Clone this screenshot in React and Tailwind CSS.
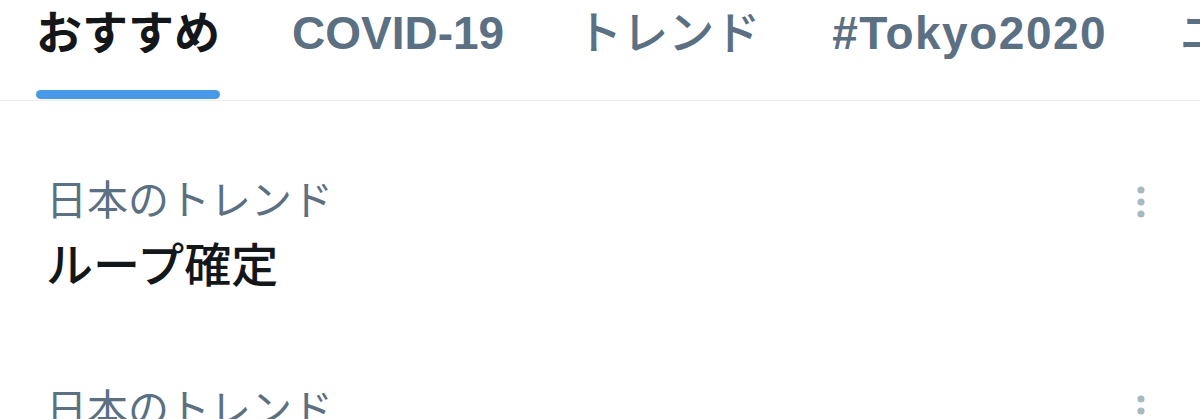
import React from 'react'

const tabs = [
  { text: 'おすすめ', cls: 'font-bold' },
  { text: 'COVID-19', cls: 'font-bold' },
  { text: 'トレンド', cls: 'font-medium' },
  { text: '#Tokyo2020', cls: 'font-bold tracking-[1.5px]' },
  { text: 'ニュース', cls: 'font-medium' },
]

const trends = [
  { label: '日本のトレンド', title: 'ループ確定' },
  { label: '日本のトレンド', title: 'ワクチン接種' },
]

const MoreIcon = () => (
  <svg viewBox="0 0 30 36" className="w-[30px] h-[36px] mt-[8px] shrink-0" fill="#aab8c2">
    <circle cx="15" cy="6" r="3.6" />
    <circle cx="15" cy="18" r="3.6" />
    <circle cx="15" cy="30" r="3.6" />
  </svg>
)

const App = () => {
  return (
    <div
      className="w-[1200px] h-[419px] overflow-hidden bg-white"
      style={{ fontFamily: '"Liberation Sans", "Noto Sans CJK JP", sans-serif' }}
    >
      {/* Tabs */}
      <nav className="flex h-[101px] border-b border-[#e6ecf0] whitespace-nowrap">
        {tabs.map((tab, i) => (
          <div key={tab.text} className="px-[36px] shrink-0">
            <div className="flex flex-col h-full">
              <span
                className={
                  'pt-[3px] text-[46px] leading-[60px] ' +
                  tab.cls +
                  (i === 0 ? ' text-[#14171a]' : ' text-[#5b7083]')
                }
              >
                {tab.text}
              </span>
              {i === 0 && <div className="mt-auto mb-[1px] h-[9px] rounded-full bg-[#4a99e9]" />}
            </div>
          </div>
        ))}
      </nav>

      {/* Trends */}
      <section className="pt-[39px]">
        {trends.map((t, i) => (
          <div key={i} className="h-[209px] pt-[36px] pl-[46px] pr-[44px] flex justify-between items-start">
            <div className="flex flex-col">
              <span className="text-[41px] leading-[50px] text-[#5b7083]">{t.label}</span>
              <span className="mt-[12px] text-[47px] leading-[56px] font-medium text-[#14171a]">{t.title}</span>
            </div>
            <MoreIcon />
          </div>
        ))}
      </section>
    </div>
  )
}

export default App
